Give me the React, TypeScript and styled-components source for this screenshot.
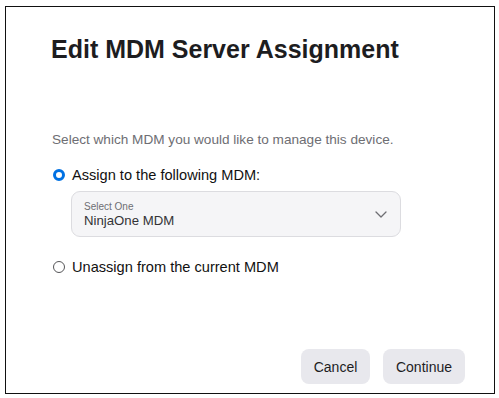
import React, { useState } from 'react'
import { styled, createGlobalStyle } from 'styled-components'

const GlobalStyle = createGlobalStyle`
    html, body {
        margin: 0;
        padding: 0;
        background: #ffffff;
    }
    body {
        font-family: "Liberation Sans", Arial, sans-serif;
        color: #1d1d1f;
    }
`

const Frame = styled.div`
    box-sizing: border-box;
    margin: 6px 0 0 5px;
    width: 490px;
    height: 388px;
    border: 1px solid #111111;
    background: #ffffff;
    display: flex;
    flex-direction: column;
    padding: 27px 29px 9px 46px;
`

const Title = styled.h1`
    margin: 0 0 0 -1px;
    font-size: 25px;
    line-height: 30px;
    font-weight: 700;
    color: #1d1d1f;
`

const Description = styled.p`
    margin: 67px 0 0 0;
    font-size: 13.6px;
    line-height: 18px;
    color: #6e6e73;
`

const Options = styled.div`
    display: flex;
    flex-direction: column;
    margin-top: 16px;
`

const OptionRow = styled.label<{ $gap?: number }>`
    display: flex;
    align-items: center;
    gap: 7px;
    margin-top: ${(p) => p.$gap ?? 0}px;
    height: 20px;
    font-size: 14.6px;
    line-height: 20px;
    color: #111111;
    cursor: pointer;
`

const Radio = styled.span<{ $checked: boolean }>`
    box-sizing: border-box;
    width: 12px;
    height: 12px;
    margin-left: 1px;
    border-radius: 50%;
    flex-shrink: 0;
    background: #ffffff;
    border: ${(p) => (p.$checked ? '3.5px solid #0071e3' : '1px solid #555558')};
`

const SelectBox = styled.div`
    box-sizing: border-box;
    margin: 6px 0 0 19px;
    width: 330px;
    height: 46px;
    border: 1px solid #dcdce0;
    border-radius: 9px;
    background: #f5f5f7;
    display: flex;
    align-items: flex-start;
    justify-content: space-between;
    padding: 9px 13px 0 12px;
`

const SelectText = styled.div`
    display: flex;
    flex-direction: column;
`

const SelectLabel = styled.span`
    font-size: 10px;
    line-height: 12px;
    color: #6e6e73;
`

const SelectValue = styled.span`
    font-size: 13.2px;
    line-height: 16px;
    color: #333336;
`

const Chevron = styled.svg`
    margin-top: 10px;
`

const Spacer = styled.div`
    flex: 1;
`

const Footer = styled.div`
    display: flex;
    justify-content: flex-end;
    gap: 13px;
`

const Button = styled.button<{ $width: number }>`
    box-sizing: border-box;
    width: ${(p) => p.$width}px;
    height: 35px;
    border: none;
    border-radius: 8px;
    background: #e8e8ed;
    font-family: "Liberation Sans", Arial, sans-serif;
    font-size: 14px;
    color: #1d1d1f;
    padding: 0;
    cursor: pointer;
`

export default function App() {
    const [assign, setAssign] = useState(true)

    return (
        <>
            <GlobalStyle />
            <Frame>
                <Title>Edit MDM Server Assignment</Title>
                <Description>Select which MDM you would like to manage this device.</Description>

                <Options>
                    <OptionRow onClick={() => setAssign(true)}>
                        <Radio $checked={assign} />
                        Assign to the following MDM:
                    </OptionRow>

                    <SelectBox>
                        <SelectText>
                            <SelectLabel>Select One</SelectLabel>
                            <SelectValue>NinjaOne MDM</SelectValue>
                        </SelectText>
                        <Chevron width="12" height="7" viewBox="0 0 12 7" fill="none">
                            <path d="M1 1l5 5 5-5" stroke="#6e6e73" strokeWidth="1.3" strokeLinecap="round" strokeLinejoin="round" />
                        </Chevron>
                    </SelectBox>

                    <OptionRow $gap={20} onClick={() => setAssign(false)}>
                        <Radio $checked={!assign} />
                        Unassign from the current MDM
                    </OptionRow>
                </Options>

                <Spacer />

                <Footer>
                    <Button $width={69}>Cancel</Button>
                    <Button $width={82}>Continue</Button>
                </Footer>
            </Frame>
        </>
    )
}
